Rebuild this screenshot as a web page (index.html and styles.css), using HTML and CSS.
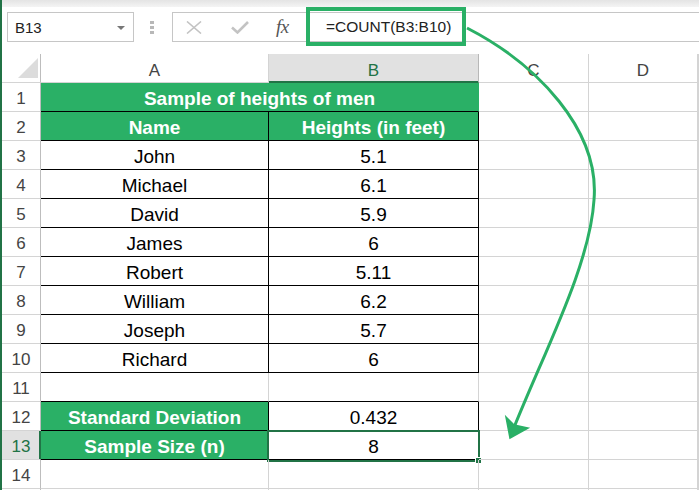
FILE: index.html
```html
<!DOCTYPE html>
<html>
<head>
<meta charset="utf-8">
<link rel="stylesheet" href="styles.css">
</head>
<body>
<div class="app">
  <div class="topband"></div>
  <div class="fbar">
    <div class="namebox"><span class="nb-text">B13</span><span class="dd"></span></div>
    <div class="dots"><i></i><i></i><i></i></div>
    <div class="btns">
      <svg class="ic-x" width="16" height="13" viewBox="0 0 16 13"><path d="M1 0.5 L15 12.5 M15 0.5 L1 12.5" stroke="#c3c3c3" stroke-width="1.6" fill="none"/></svg>
      <svg class="ic-ok" width="18" height="13" viewBox="0 0 18 13"><path d="M1 6.5 L6.5 11.5 L17 1" stroke="#c3c3c3" stroke-width="2.6" fill="none"/></svg>
      <span class="fx">fx</span>
    </div>
    <div class="formula">=COUNT(B3:B10)</div>
  </div>
  <div class="sheet">
    <div class="corner"><span class="tri"></span></div>
    <div class="ch">A</div>
    <div class="ch sel">B</div>
    <div class="ch">C</div>
    <div class="ch">D</div>
    <div class="ch"></div>

    <div class="rh">1</div>
    <div class="c g merge t1">Sample of heights of men</div>
    <div class="c"></div><div class="c"></div><div class="c"></div>

    <div class="rh">2</div>
    <div class="c g bk">Name</div><div class="c g bk">Heights (in feet)</div>
    <div class="c"></div><div class="c"></div><div class="c"></div>

    <div class="rh">3</div>
    <div class="c bk">John</div><div class="c bk">5.1</div>
    <div class="c"></div><div class="c"></div><div class="c"></div>

    <div class="rh">4</div>
    <div class="c bk">Michael</div><div class="c bk">6.1</div>
    <div class="c"></div><div class="c"></div><div class="c"></div>

    <div class="rh">5</div>
    <div class="c bk">David</div><div class="c bk">5.9</div>
    <div class="c"></div><div class="c"></div><div class="c"></div>

    <div class="rh">6</div>
    <div class="c bk">James</div><div class="c bk">6</div>
    <div class="c"></div><div class="c"></div><div class="c"></div>

    <div class="rh">7</div>
    <div class="c bk">Robert</div><div class="c bk">5.11</div>
    <div class="c"></div><div class="c"></div><div class="c"></div>

    <div class="rh">8</div>
    <div class="c bk">William</div><div class="c bk">6.2</div>
    <div class="c"></div><div class="c"></div><div class="c"></div>

    <div class="rh">9</div>
    <div class="c bk">Joseph</div><div class="c bk">5.7</div>
    <div class="c"></div><div class="c"></div><div class="c"></div>

    <div class="rh">10</div>
    <div class="c bk">Richard</div><div class="c bk">6</div>
    <div class="c"></div><div class="c"></div><div class="c"></div>

    <div class="rh">11</div>
    <div class="c bb"></div><div class="c bb"></div>
    <div class="c"></div><div class="c"></div><div class="c"></div>

    <div class="rh">12</div>
    <div class="c g bk">Standard Deviation</div><div class="c bk">0.432</div>
    <div class="c"></div><div class="c"></div><div class="c"></div>

    <div class="rh rsel">13</div>
    <div class="c g bk">Sample Size (n)</div><div class="c bk active">8<span class="selbox"><span class="handle"></span></span></div>
    <div class="c"></div><div class="c"></div><div class="c"></div>

    <div class="rh">14</div>
    <div class="c"></div><div class="c"></div>
    <div class="c"></div><div class="c"></div><div class="c"></div>

    <div class="rh"></div>
    <div class="c"></div><div class="c"></div>
    <div class="c"></div><div class="c"></div><div class="c"></div>
  </div>
</div>
<div class="hlbox"></div>
<svg class="arrow" width="699" height="490" viewBox="0 0 699 490">
  <path d="M467 28 C537 64 600 130 594 200 C590 265 545 350 513 430" stroke="#2ab066" stroke-width="3" fill="none"/>
  <path d="M510 438 L506 417 L514 425 L528 428 Z" stroke="#2ab066" stroke-width="1.5" stroke-linejoin="miter" fill="#2ab066"/>
</svg>
</body>
</html>
```

FILE: styles.css
```css
html, body {
  margin: 0;
  padding: 0;
  background: #ffffff;
}
body {
  position: relative;
  width: 699px;
  height: 490px;
  overflow: hidden;
  font-family: "Liberation Sans", Arial, sans-serif;
}
.app {
  border-left: 2px solid #217346;
  height: 490px;
  overflow: hidden;
  box-sizing: border-box;
}
.topband {
  height: 7px;
  background: linear-gradient(#e4e4e4, #f4f4f4);
}
.fbar {
  display: flex;
  align-items: stretch;
  height: 30px;
  margin-top: 5px;
}
.namebox {
  box-sizing: border-box;
  width: 127px;
  margin-left: 5px;
  border: 1px solid #c6c6c6;
  display: flex;
  align-items: center;
  justify-content: space-between;
  padding: 0 8px 0 7px;
  font-size: 15px;
  color: #222;
}
.dd {
  width: 0;
  height: 0;
  border-left: 4px solid transparent;
  border-right: 4px solid transparent;
  border-top: 4px solid #777;
  margin-top: 1px;
}
.dots {
  width: 38px;
  display: flex;
  flex-direction: column;
  align-items: center;
  justify-content: center;
  gap: 2px;
  padding-right: 2px;
  box-sizing: border-box;
}
.dots i {
  display: block;
  width: 4px;
  height: 3px;
  background: #b8b8b8;
}
.btns {
  box-sizing: border-box;
  width: 134px;
  border: 1px solid #c6c6c6;
  border-right: none;
  display: flex;
  align-items: center;
  padding-left: 13px;
}
.ic-ok {
  margin-left: 29px;
}
.fx {
  margin-left: 27px;
  font-family: "Liberation Serif", "Times New Roman", serif;
  font-style: italic;
  font-size: 19px;
  color: #555;
  letter-spacing: -0.5px;
}
.formula {
  flex: 1;
  box-sizing: border-box;
  border: 1px solid #c6c6c6;
  border-right: none;
  margin-left: 3px;
  padding-left: 16px;
  display: flex;
  align-items: center;
  font-size: 15.5px;
  color: #222;
}
.sheet {
  margin-top: 12px;
  display: grid;
  grid-template-columns: 39px 228px 210px 110px 109px 1fr;
  grid-auto-rows: 29px;
}
.sheet > div {
  box-sizing: border-box;
  border-right: 1px solid #d4d4d4;
  border-bottom: 1px solid #d4d4d4;
  display: flex;
  align-items: flex-end;
  justify-content: center;
  position: relative;
}
.corner {
  justify-content: flex-end !important;
  padding: 0 2px 4px 0;
  border-right-color: #bdbdbd !important;
}
.tri {
  width: 0;
  height: 0;
  border-left: 20px solid transparent;
  border-bottom: 20px solid #dcdcdc;
}
.ch {
  font-size: 17px;
  line-height: 20px;
  color: #444;
  padding-bottom: 1px;
}
.ch.sel {
  background: #e1e1e1;
  color: #217346;
  border-bottom-color: #217346 !important;
  box-shadow: inset 0 -1px 0 #217346;
  border-right-color: #b8b8b8 !important;
}
.rh {
  font-size: 17px;
  line-height: 20px;
  color: #444;
  padding-bottom: 2px;
  border-right-color: #bdbdbd !important;
}
.rh.rsel {
  background: #e1e1e1;
  color: #217346;
  border-right-color: #217346 !important;
  box-shadow: inset -1px 0 0 #217346;
}
.c {
  font-size: 19px;
  line-height: 22px;
  color: #000;
  padding-bottom: 1px;
}
.g {
  background: #2ab066;
  color: #fff;
  font-weight: bold;
}
.merge {
  grid-column: span 2;
}
.t1 {
  border-right-color: #2ab066 !important;
  border-bottom-color: #000 !important;
}
.bk {
  border-right-color: #000 !important;
  border-bottom-color: #000 !important;
}
.bb {
  border-bottom-color: #000 !important;
}
.selbox {
  position: absolute;
  left: -2px;
  top: -1px;
  width: 213px;
  height: 32px;
  box-sizing: border-box;
  border: 2px solid #217346;
}
.handle {
  position: absolute;
  right: -4px;
  bottom: -4px;
  width: 5px;
  height: 5px;
  background: #217346;
  border: 1px solid #fff;
}
.hlbox {
  position: absolute;
  left: 306px;
  top: 7px;
  width: 160px;
  height: 39px;
  box-sizing: border-box;
  border: 4px solid #2ab066;
}
.arrow {
  position: absolute;
  left: 0;
  top: 0;
  pointer-events: none;
}
```
